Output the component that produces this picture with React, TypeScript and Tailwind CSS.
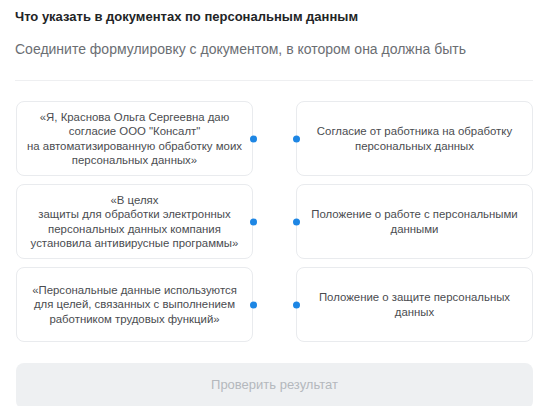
const pairs = [
    {
        left: ['«Я, Краснова Ольга Сергеевна даю', 'согласие ООО "Консалт"', 'на автоматизированную обработку моих', 'персональных данных»'],
        right: ['Согласие от работника на обработку', 'персональных данных'],
    },
    {
        left: ['«В целях', 'защиты для обработки электронных', 'персональных данных компания', 'установила антивирусные программы»'],
        right: ['Положение о работе с персональными', 'данными'],
    },
    {
        left: ['«Персональные данные используются', 'для целей, связанных с выполнением', 'работником трудовых функций»'],
        right: ['Положение о защите персональных', 'данных'],
    },
];

const Card = ({ lines, side }: { lines: string[], side: 'left' | 'right' }) => {
    return (
        <div className="relative h-[75px] rounded-lg border border-[#e9ebee] bg-white flex flex-col items-center justify-center px-2 text-center text-[11.4px] leading-[14.5px] text-[#4a4c50]">
            {lines.map((l, i) => (
                <span key={i} className="block whitespace-nowrap">{l}</span>
            ))}
            <span
                className={
                    side === 'left'
                        ? 'absolute right-[-5px] top-1/2 -translate-y-1/2 w-[7px] h-[7px] rounded-full bg-[#1d86e4]'
                        : 'absolute left-[-4px] top-1/2 -translate-y-1/2 w-[7px] h-[7px] rounded-full bg-[#1d86e4]'
                }
            />
        </div>
    )
}

export default function App() {
    return (
        <div className="w-[541px] h-[406px] overflow-hidden bg-white pl-[16px] pr-[8px] font-['Liberation_Sans',Arial,sans-serif]">
            <h1 className="pt-[9px] text-[13px] leading-[16px] font-bold text-[#222426] -ml-px">
                Что указать в документах по персональным данным
            </h1>
            <p className="mt-[15px] text-[14px] leading-[18px] text-[#6b6e73] -ml-px">
                Соедините формулировку с документом, в котором она должна быть
            </p>
            <div className="mt-[22px] h-px bg-[#eeeff1] -ml-px" />

            <div className="mt-[20px] grid grid-cols-2 gap-x-[43px] gap-y-[8px]">
                {pairs.map((p, i) => (
                    <div key={i} className="contents">
                        <Card lines={p.left} side="left" />
                        <Card lines={p.right} side="right" />
                    </div>
                ))}
            </div>

            <button className="mt-[21px] w-full h-[46px] rounded-lg bg-[#eef0f2] text-[13px] text-[#b4b8bd] flex items-center justify-center pb-[2px]">
                Проверить результат
            </button>
        </div>
    )
}
